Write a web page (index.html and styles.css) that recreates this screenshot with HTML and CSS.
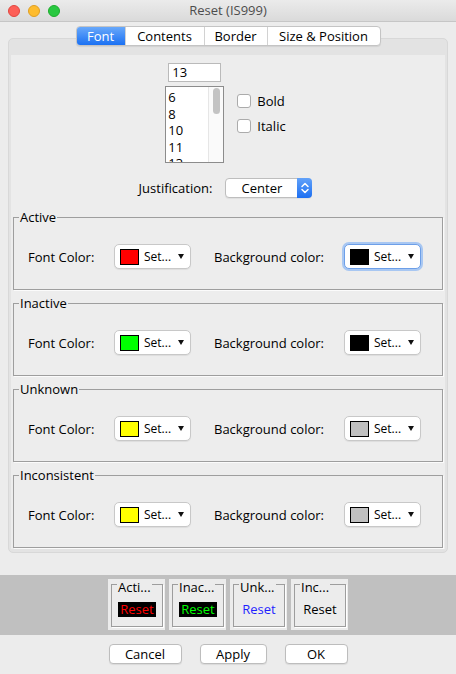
FILE: index.html
```html
<!DOCTYPE html>
<html>
<head>
<meta charset="utf-8">
<title>Reset (IS999)</title>
<link rel="stylesheet" href="styles.css">
</head>
<body>
<div class="window">
  <header class="titlebar">
    <div class="lights">
      <span class="light red"></span>
      <span class="light yellow"></span>
      <span class="light green"></span>
    </div>
    <div class="title">Reset (IS999)</div>
    <div></div>
  </header>

  <nav class="tabs">
    <span class="tab tab-font active">Font</span>
    <span class="tab tab-contents">Contents</span>
    <span class="tab tab-border">Border</span>
    <span class="tab tab-size">Size &amp; Position</span>
  </nav>

  <section class="pane">
    <div class="panel">
      <div class="font-row">
        <div class="size-col">
          <div class="size-field">13</div>
          <div class="size-list">
            <div class="items">
              <div>6</div>
              <div>8</div>
              <div>10</div>
              <div>11</div>
              <div>13</div>
            </div>
            <div class="scroll"><div class="thumb"></div></div>
          </div>
        </div>
        <div class="checks">
          <label class="check"><span class="box"></span>Bold</label>
          <label class="check"><span class="box"></span>Italic</label>
        </div>
      </div>

      <div class="just-row">
        <span>Justification:</span>
        <div class="combo">
          <span class="combo-text">Center</span>
          <span class="stepper">
            <svg width="14" height="20" viewBox="0 0 14 20"><path d="M4 8.5 L7 5.5 L10 8.5" fill="none" stroke="#fff" stroke-width="1.5" stroke-linecap="round" stroke-linejoin="round"/><path d="M4 11.5 L7 14.5 L10 11.5" fill="none" stroke="#fff" stroke-width="1.5" stroke-linecap="round" stroke-linejoin="round"/></svg>
          </span>
        </div>
      </div>

      <fieldset class="group first">
        <legend>Active</legend>
        <div class="color-row">
          <span>Font Color:</span>
          <div class="setbtn"><span class="swatch sw-red"></span><span class="set-text">Set...</span><span class="caret"></span></div>
          <span class="bg-label">Background color:</span>
          <div class="setbtn focus"><span class="swatch sw-black"></span><span class="set-text">Set...</span><span class="caret"></span></div>
        </div>
      </fieldset>

      <fieldset class="group">
        <legend>Inactive</legend>
        <div class="color-row">
          <span>Font Color:</span>
          <div class="setbtn"><span class="swatch sw-green"></span><span class="set-text">Set...</span><span class="caret"></span></div>
          <span class="bg-label">Background color:</span>
          <div class="setbtn"><span class="swatch sw-black"></span><span class="set-text">Set...</span><span class="caret"></span></div>
        </div>
      </fieldset>

      <fieldset class="group">
        <legend>Unknown</legend>
        <div class="color-row">
          <span>Font Color:</span>
          <div class="setbtn"><span class="swatch sw-yellow"></span><span class="set-text">Set...</span><span class="caret"></span></div>
          <span class="bg-label">Background color:</span>
          <div class="setbtn"><span class="swatch sw-gray"></span><span class="set-text">Set...</span><span class="caret"></span></div>
        </div>
      </fieldset>

      <fieldset class="group">
        <legend>Inconsistent</legend>
        <div class="color-row">
          <span>Font Color:</span>
          <div class="setbtn"><span class="swatch sw-yellow"></span><span class="set-text">Set...</span><span class="caret"></span></div>
          <span class="bg-label">Background color:</span>
          <div class="setbtn"><span class="swatch sw-gray"></span><span class="set-text">Set...</span><span class="caret"></span></div>
        </div>
      </fieldset>
    </div>
  </section>

  <div class="band">
    <div class="mini">
      <div class="mini-frame">
        <span class="mini-title">Acti...</span>
        <span class="reset r-active">Reset</span>
      </div>
    </div>
    <div class="mini">
      <div class="mini-frame">
        <span class="mini-title">Inac...</span>
        <span class="reset r-inactive">Reset</span>
      </div>
    </div>
    <div class="mini">
      <div class="mini-frame">
        <span class="mini-title">Unk...</span>
        <span class="reset r-unknown">Reset</span>
      </div>
    </div>
    <div class="mini">
      <div class="mini-frame">
        <span class="mini-title">Inc...</span>
        <span class="reset r-incons">Reset</span>
      </div>
    </div>
  </div>

  <div class="actions">
    <button class="btn btn-cancel">Cancel</button>
    <button class="btn btn-apply">Apply</button>
    <button class="btn btn-ok">OK</button>
  </div>
</div>
</body>
</html>
```

FILE: styles.css
```css
* { box-sizing: border-box; }

body {
  margin: 0;
  background: #ececec;
  font-family: "Open Sans", "Noto Sans", sans-serif;
  font-size: 13px;
  color: #000;
}

.window {
  width: 456px;
  height: 674px;
  overflow: hidden;
}

/* title bar */
.titlebar {
  height: 22px;
  display: grid;
  grid-template-columns: 1fr auto 1fr;
  align-items: center;
  background: linear-gradient(#ebebeb, #dadada);
  border-bottom: 1px solid #c6c6c6;
}
.lights { display: flex; gap: 8px; padding-left: 8px; }
.light { width: 12px; height: 12px; border-radius: 50%; }
.red { background: #fd5f57; border: 1px solid #e1463f; }
.yellow { background: #febc2e; border: 1px solid #df9f22; }
.green { background: #28c840; border: 1px solid #1dac2c; }
.title { color: #4d4d4d; line-height: 21px; }

/* tabs */
.tabs {
  display: flex;
  width: fit-content;
  height: 20px;
  margin: 4px auto 0;
  position: relative;
  z-index: 1;
  background: #fff;
  border: 1px solid #c4c4c4;
  border-radius: 4px;
  overflow: hidden;
  box-shadow: 0 1px 1px rgba(0,0,0,0.08);
}
.tab {
  line-height: 18px;
  text-align: center;
  border-left: 1px solid #d2d2d2;
  color: #000;
}
.tab.active {
  border-left: none;
  color: #fff;
  background: linear-gradient(#68a8fa, #1b71f3);
}
.tab-font { width: 48px; }
.tab-contents { width: 79px; }
.tab-border { width: 63px; }
.tab-size { width: 113px; }

/* tab pane */
.pane {
  margin: -8px 8px 0;
  border: 1px solid #d8d8d8;
  border-radius: 5px;
  background: #e3e3e3;
  padding: 16px 2px 3px;
}
.panel {
  background: #ededed;
  padding: 8px 0 1px;
}

.font-row {
  display: flex;
  justify-content: center;
  gap: 13px;
  height: 100px;
  padding-right: 5px;
}
.size-col {
  display: flex;
  flex-direction: column;
  align-items: center;
  gap: 4px;
}
.size-field {
  width: 53px;
  height: 19px;
  background: #fff;
  border: 1px solid #bababa;
  padding-left: 3px;
  line-height: 17px;
}
.size-list {
  width: 59px;
  height: 77px;
  display: flex;
  background: #fff;
  border: 1px solid #8c8c8c;
  overflow: hidden;
}
.items {
  flex: 1;
  padding: 2px 0 0 2px;
  line-height: 16.5px;
  overflow: hidden;
}
.scroll {
  width: 15px;
  border-left: 1px solid #e6e6e6;
  background: #fafafa;
  padding: 1px 0 0 4px;
}
.thumb {
  width: 7px;
  height: 26px;
  border-radius: 4px;
  background: #c3c3c3;
}
.checks {
  display: flex;
  flex-direction: column;
  gap: 11px;
  padding-top: 31px;
}
.check {
  display: flex;
  align-items: center;
  gap: 6px;
  height: 14px;
}
.box {
  width: 14px;
  height: 14px;
  border: 1px solid #ababab;
  border-radius: 3px;
  background: #fff;
}

.just-row {
  display: flex;
  justify-content: center;
  align-items: center;
  gap: 13px;
  margin-top: 15px;
  height: 20px;
  padding-right: 5px;
}
.combo {
  width: 87px;
  height: 20px;
  display: flex;
  background: #fff;
  border: 1px solid #bebebe;
  border-radius: 4px;
  box-shadow: 0 1px 1px rgba(0,0,0,0.06);
}
.combo-text {
  flex: 1;
  text-align: center;
  line-height: 18px;
}
.stepper {
  width: 15px;
  margin: -1px -1px -1px 0;
  border-radius: 0 4px 4px 0;
  background: linear-gradient(#62a2f9, #1c6ff2);
  display: flex;
  align-items: center;
  justify-content: center;
}

/* colour groups */
.group {
  margin: 6px 2px 0;
  padding: 19px 0 20px 5px;
  border: 1px solid #9e9e9e;
  box-shadow: 1px 1px 0 #fbfbfb;
  min-width: 0;
}
.group.first { margin-top: 12px; }
.group legend {
  padding: 0 1px;
  line-height: 15px;
}
.color-row {
  display: grid;
  grid-template-columns: 86px 77px 153px 77px;
  align-items: center;
  height: 25px;
  padding-left: 9px;
}
.bg-label { padding-left: 23px; }
.setbtn {
  display: flex;
  align-items: center;
  height: 25px;
  background: #fff;
  border: 1px solid #c8c8c8;
  border-radius: 5px;
  padding: 0 6px 0 5px;
  box-shadow: 0 1px 1px rgba(0,0,0,0.07);
}
.setbtn.focus {
  border-color: #6d9fe8;
  box-shadow: 0 0 0 2px #a8c7f2;
}
.swatch {
  width: 19px;
  height: 16px;
  border: 1px solid #000;
}
.sw-red { background: #ff0000; }
.sw-black { background: #000; }
.sw-green { background: #00ff00; }
.sw-yellow { background: #ffff00; }
.sw-gray { background: #c0c0c0; }
.set-text {
  margin-left: 5px;
  font-size: 12px;
}
.caret {
  margin-left: auto;
  border-left: 3.5px solid transparent;
  border-right: 3.5px solid transparent;
  border-top: 5px solid #111;
}

/* bottom band */
.band {
  margin-top: 22px;
  height: 60px;
  background: #c0c0c0;
  display: flex;
  justify-content: center;
  gap: 4px;
  padding-top: 4px;
}
.mini {
  width: 57px;
  height: 51px;
  background: #ececec;
  padding: 5px 2px 3px 3px;
}
.mini-frame {
  height: 100%;
  border: 1px solid #9d9d9d;
  box-shadow: 1px 1px 0 #fff;
  display: flex;
  flex-direction: column;
  align-items: center;
}
.mini-title {
  align-self: flex-start;
  margin: -4px 0 0 5px;
  padding: 0 1px;
  line-height: 13px;
  background: #ececec;
}
.reset {
  margin-top: 8px;
  padding: 0 2px;
  line-height: 15px;
}
.r-active { background: #000; color: #ff0000; }
.r-inactive { background: #000; color: #00ff00; }
.r-unknown { color: #1f1fff; }
.r-incons { color: #000; }

/* action buttons */
.actions {
  display: flex;
  justify-content: center;
  gap: 18px;
  margin-top: 9px;
}
.btn {
  height: 20px;
  padding: 0;
  font-family: inherit;
  font-size: 13px;
  line-height: 18px;
  color: #000;
  background: #fff;
  border: 1px solid #bdbdbd;
  border-radius: 4px;
  box-shadow: 0 1px 1px rgba(0,0,0,0.08);
}
.btn-cancel { width: 73px; }
.btn-apply { width: 67px; }
.btn-ok { width: 63px; }
```
